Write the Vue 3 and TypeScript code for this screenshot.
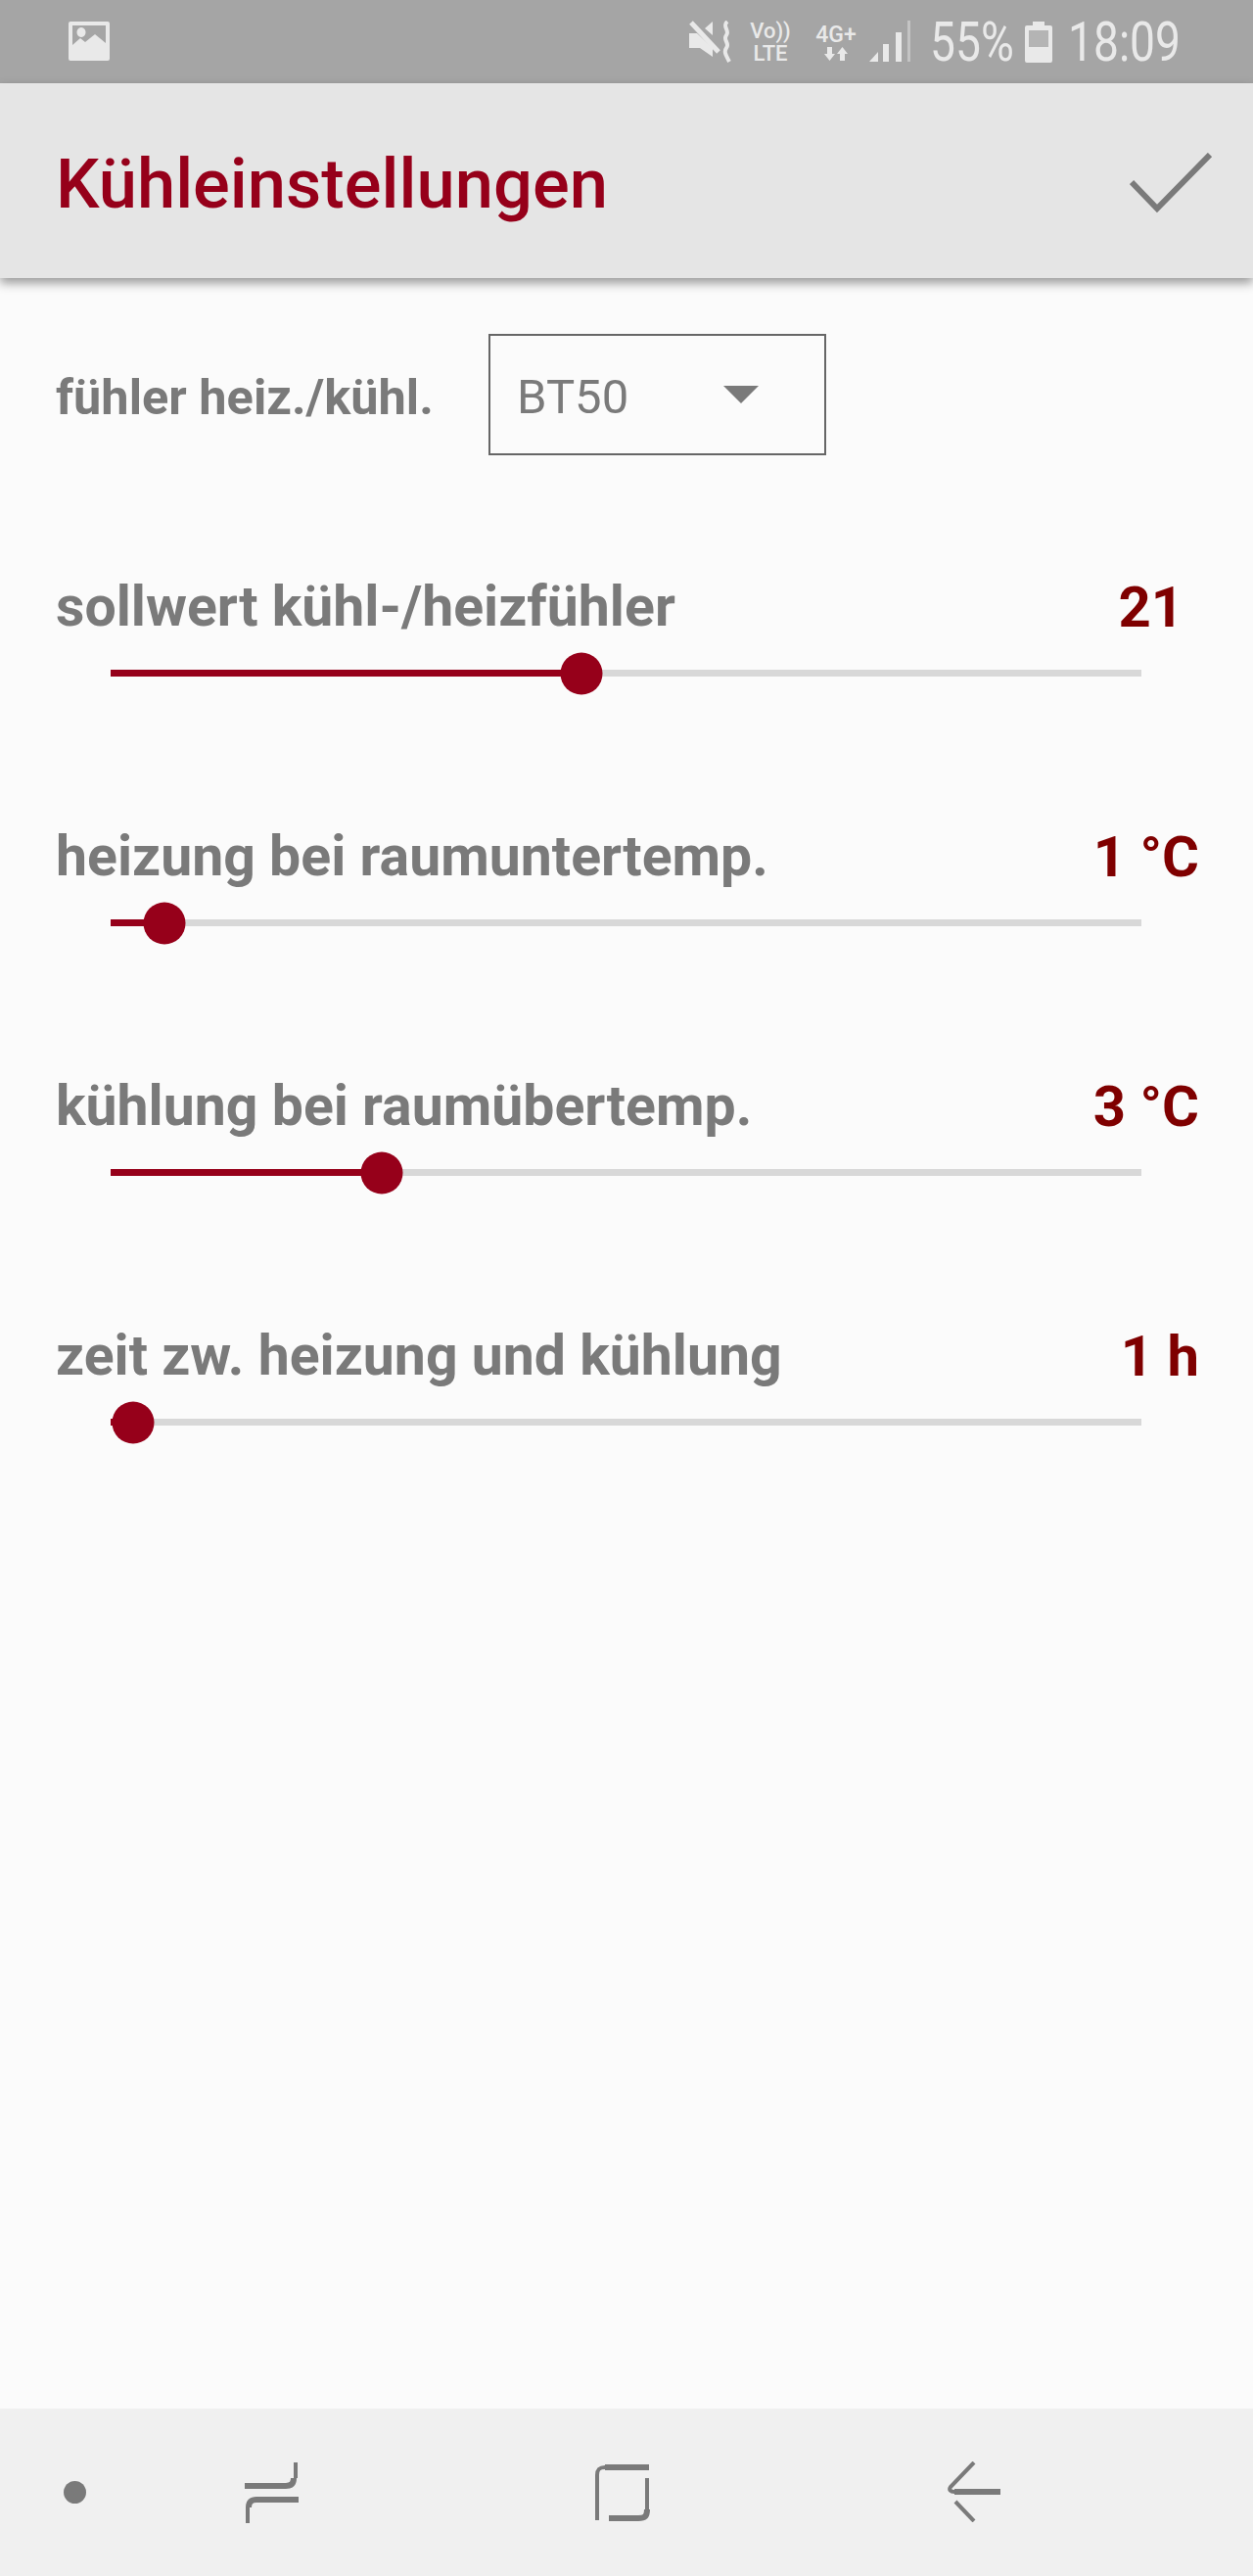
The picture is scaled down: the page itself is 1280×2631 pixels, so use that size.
<script setup lang="ts">
interface SliderRow {
  label: string
  value: string
  thumb: number
  unitless?: boolean
}

const trackWidth = 1053

const rows: SliderRow[] = [
  { label: 'sollwert kühl-/heizfühler', value: '21', thumb: 481, unitless: true },
  { label: 'heizung bei raumuntertemp.', value: '1 °C', thumb: 55 },
  { label: 'kühlung bei raumübertemp.', value: '3 °C', thumb: 277 },
  { label: 'zeit zw. heizung und kühlung', value: '1 h', thumb: 23 }
]

const pct = (px: number) => `${(px / trackWidth) * 100}%`
</script>

<template>
  <div class="screen">
    <div class="status-bar">
      <svg class="pic-icon" width="42" height="40" viewBox="0 0 42 40">
        <path fill-rule="evenodd" fill="#e9e9e9" d="M2 0h38a2 2 0 0 1 2 2v36a2 2 0 0 1-2 2H2a2 2 0 0 1-2-2V2a2 2 0 0 1 2-2zM4 4v20l8-7 5 4 10-8 11 9V4zM13 6a4.500 5 0 1 0 .01 0z"/>
      </svg>
      <div class="status-right">
        <svg width="44" height="43" viewBox="0 0 44 43">
          <path fill="#e9e9e9" d="M0 13h8l16 15v9L11 28H0zM16 8l8-7v14z"/>
          <path fill="none" stroke="#e9e9e9" stroke-width="5" d="M2 2l28 30"/>
          <path fill="none" stroke="#e9e9e9" stroke-width="4" d="M39 1c-6 5 3 9-1 14-4 5 4 8 0 13-3 4 0 8 3 14"/>
        </svg>
        <div class="volte">
          <span class="vo">Vo))</span>
          <span class="lte">LTE</span>
        </div>
        <div class="net">
          <span class="net-label">4G+</span>
          <svg width="24" height="14" viewBox="0 0 24 14">
            <path fill="#e9e9e9" d="M3 0h5v7h3l-5.500 7L0 7h3zM16 14h5V7h3L18.500 0 13 7h3z"/>
          </svg>
        </div>
        <svg width="42" height="43" viewBox="0 0 42 43">
          <path fill="#e9e9e9" d="M0 42l9-10v10zM14 24h6v18h-6zM27 12h6v30h-6z"/>
          <path fill="#c4c4c4" d="M39 0h3v42h-3z"/>
        </svg>
        <span class="pct">55%</span>
        <svg class="battery" width="28" height="42" viewBox="0 0 28 42">
          <path fill="#e9e9e9" d="M8 0h12v4h6a2 2 0 0 1 2 2v34a2 2 0 0 1-2 2H2a2 2 0 0 1-2-2V6a2 2 0 0 1 2-2h6z"/>
          <path fill="#b4b4b4" d="M4 9h20v17H4z"/>
        </svg>
        <span class="time">18:09</span>
      </div>
    </div>

    <header class="app-bar">
      <h1 class="title">Kühleinstellungen</h1>
      <svg class="check" width="84" height="62" viewBox="0 0 84 62">
        <path fill="none" stroke="#7a7a7a" stroke-width="6" d="M2 30l26 27 54-55"/>
      </svg>
    </header>

    <main class="content">
      <div class="sensor-row">
        <span class="label">fühler heiz./kühl.</span>
        <div class="select">
          <span>BT50</span>
          <span class="caret"></span>
        </div>
      </div>

      <section v-for="row in rows" :key="row.label" class="slider-row">
        <div class="slider-head">
          <span class="label">{{ row.label }}</span>
          <span class="value" :class="{ unitless: row.unitless }">{{ row.value }}</span>
        </div>
        <div class="track">
          <div class="fill" :style="{ width: pct(row.thumb) }"></div>
          <div class="thumb" :style="{ left: pct(row.thumb) }"></div>
        </div>
      </section>
    </main>

    <nav class="nav-bar">
      <span class="dot"></span>
      <svg class="nav-recent" width="56" height="64" viewBox="0 0 56 64">
        <path class="thick" d="M0 25h42c6 0 8-3 8-8"/>
        <path class="thin" d="M52 1v16"/>
        <path class="thick" d="M55 39H12c-6 0-8 3-8 8"/>
        <path class="thin" d="M3 47v16"/>
      </svg>
      <svg class="nav-home" width="56" height="60" viewBox="0 0 56 60">
        <path class="thick" d="M55 4H10"/>
        <path class="thin" d="M10 4C4 4 2 6 2 12v46"/>
        <path class="thin" d="M53 15v32"/>
        <path class="thick" d="M53 47c0 7-2 9-9 9H14"/>
      </svg>
      <svg class="nav-back" width="56" height="62" viewBox="0 0 56 62">
        <path class="thin" d="M27 1 3 26c-2 3 0 5 4 5"/>
        <path class="thick" d="M7 31h47"/>
        <path class="thin" d="M8 41l19 20"/>
      </svg>
    </nav>
  </div>
</template>

<style scoped>
.screen {
  width: 1280px;
  height: 2631px;
  display: flex;
  flex-direction: column;
  background: #fbfbfb;
  font-family: Roboto, "Liberation Sans", sans-serif;
  overflow: hidden;
}

.status-bar {
  height: 85px;
  flex: none;
  display: flex;
  align-items: center;
  justify-content: space-between;
  padding: 0 76px 0 70px;
  box-sizing: border-box;
  background: #a5a5a5;
  color: #e9e9e9;
}

.pic-icon {
  margin-top: -2px;
}

.status-right {
  display: flex;
  align-items: center;
}

.volte {
  display: flex;
  flex-direction: column;
  width: 44px;
  margin-left: 17px;
  font-size: 22px;
  line-height: 23px;
  font-weight: 500;
  text-align: center;
}

.net {
  display: flex;
  flex-direction: column;
  align-items: center;
  width: 44px;
  margin: 0 12px 0 23px;
  font-weight: 500;
}

.net-label {
  font-size: 23px;
  line-height: 24px;
  white-space: nowrap;
}

.pct,
.time {
  display: inline-block;
  font-size: 55px;
  font-weight: 400;
  line-height: 60px;
  white-space: nowrap;
  transform: scaleX(0.84);
  transform-origin: left center;
}

.pct {
  width: 82px;
  margin: 0 15px 0 20px;
}

.time {
  width: 113px;
  margin-left: 16px;
}

.app-bar {
  height: 199px;
  flex: none;
  display: flex;
  align-items: center;
  justify-content: space-between;
  padding: 0 42px 0 57px;
  box-sizing: border-box;
  background: #e5e5e5;
  box-shadow: 0 5px 10px rgba(0, 0, 0, 0.4);
  position: relative;
}

.title {
  margin: 7px 0 0;
  color: #96001a;
  font-size: 70.500px;
  font-weight: 500;
}

.check {
  margin-top: 4px;
}

.content {
  flex: 1;
  padding-top: 57px;
}

.sensor-row {
  display: flex;
  align-items: center;
  padding-left: 57px;
  height: 124px;
  margin-bottom: 123px;
}

.sensor-row .label {
  width: 442px;
  margin-top: 6px;
  font-size: 50.500px;
}

.label {
  color: #7a7a7a;
  font-size: 57.200px;
  font-weight: 700;
  line-height: 64px;
}

.select {
  width: 345px;
  height: 124px;
  box-sizing: border-box;
  border: 2px solid #666666;
  padding: 5px 0 0 27px;
  display: flex;
  align-items: center;
  color: #7a7a7a;
  font-size: 49px;
}

.caret {
  width: 0;
  height: 0;
  margin: -6px 0 0 97px;
  border-left: 18px solid transparent;
  border-right: 18px solid transparent;
  border-top: 18px solid #7a7a7a;
}

.slider-row {
  height: 255px;
  box-sizing: border-box;
}

.slider-head {
  display: flex;
  justify-content: space-between;
  align-items: center;
  padding: 0 55px 0 57px;
}

.value {
  color: #7f0000;
  font-size: 58px;
  font-weight: 700;
  line-height: 64px;
}

.value.unitless {
  margin-right: 16px;
}

.track {
  position: relative;
  width: 1053px;
  height: 7px;
  margin: 32px 0 0 113px;
  background: #d8d8d8;
}

.fill {
  height: 100%;
  background: #96001a;
}

.thumb {
  position: absolute;
  top: 50%;
  width: 43px;
  height: 43px;
  border-radius: 50%;
  background: #96001a;
  transform: translate(-50%, -50%);
}

.nav-bar {
  height: 171px;
  flex: none;
  position: relative;
  background: #f0f0f0;
}

.nav-bar > * {
  position: absolute;
}

.dot {
  left: 65px;
  top: 74px;
  width: 23px;
  height: 23px;
  border-radius: 50%;
  background: #7a7a7a;
}

.nav-recent {
  left: 250px;
  top: 54px;
}

.nav-home {
  left: 608px;
  top: 56px;
}

.nav-back {
  left: 968px;
  top: 54px;
}

.thick,
.thin {
  fill: none;
  stroke: #7a7a7a;
}

.thick {
  stroke-width: 6;
}

.thin {
  stroke-width: 4;
}
</style>

<style>
html,
body {
  margin: 0;
  background: #fbfbfb;
}
</style>
